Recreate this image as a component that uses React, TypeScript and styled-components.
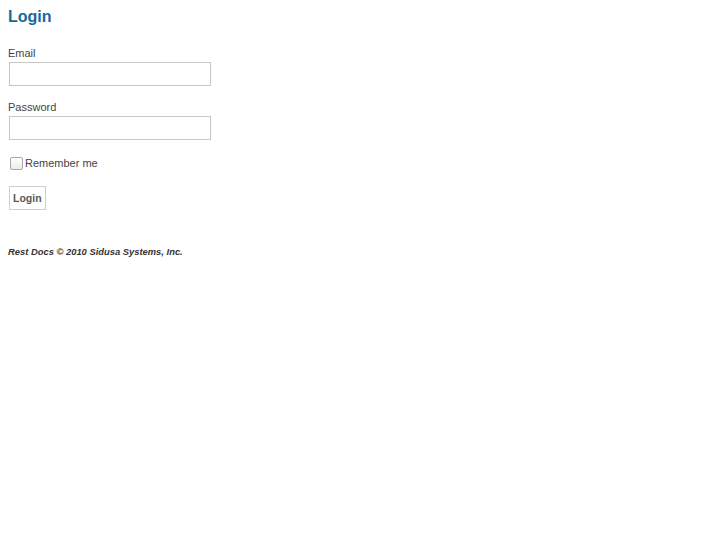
import React from 'react';
import styled, { createGlobalStyle } from 'styled-components';

const GlobalStyle = createGlobalStyle`
  html, body {
    margin: 0;
    padding: 0;
    background: #ffffff;
  }
  body {
    font-family: "Liberation Sans", Arial, sans-serif;
    color: #444444;
  }
`;

const Page = styled.div`
  padding: 8px;
`;

const Title = styled.h2`
  margin: 0;
  font-size: 16px;
  line-height: 18px;
  font-weight: bold;
  color: #17699c;
`;

const Form = styled.form`
  display: flex;
  flex-direction: column;
  align-items: flex-start;
  margin-top: 21px;
`;

const Field = styled.div<{ $gap?: number }>`
  display: flex;
  flex-direction: column;
  align-items: flex-start;
  margin-top: ${(props) => props.$gap ?? 0}px;
`;

const Label = styled.label`
  font-size: 11px;
  line-height: 13px;
  color: #444444;
`;

const Input = styled.input`
  box-sizing: border-box;
  width: 202px;
  height: 24px;
  margin: 2px 0 0 1px;
  padding: 2px 4px;
  border: 1px solid #c6c6c6;
  background: #ffffff;
  font-family: inherit;
  font-size: 11px;
  outline: none;
`;

const CheckRow = styled.label`
  display: flex;
  align-items: center;
  margin-top: 17px;
  font-size: 11px;
  line-height: 13px;
  color: #444444;
`;

const CheckBox = styled.input`
  box-sizing: border-box;
  appearance: none;
  width: 13px;
  height: 13px;
  margin: 0 2px 0 2px;
  border: 1px solid #a9a9a9;
  border-radius: 2px;
  background: linear-gradient(#ffffff, #ececec);
`;

const Button = styled.button`
  box-sizing: border-box;
  margin: 16px 0 0 1px;
  height: 24px;
  padding: 0 3px;
  border: 1px solid #cfcfcf;
  background: #ffffff;
  color: #5a5a5a;
  font-family: inherit;
  font-weight: bold;
  font-size: 10.5px;
`;

const Footer = styled.div`
  margin-top: 36px;
  font-size: 9.4px;
  line-height: 11px;
  font-weight: bold;
  font-style: italic;
  color: #333333;
`;

export default function App() {
  return (
    <Page>
      <GlobalStyle />
      <Title>Login</Title>
      <Form onSubmit={(e) => e.preventDefault()}>
        <Field>
          <Label htmlFor="email">Email</Label>
          <Input id="email" type="text" />
        </Field>
        <Field $gap={15}>
          <Label htmlFor="password">Password</Label>
          <Input id="password" type="password" />
        </Field>
        <CheckRow>
          <CheckBox type="checkbox" />
          Remember me
        </CheckRow>
        <Button type="submit">Login</Button>
      </Form>
      <Footer>Rest Docs © 2010 Sidusa Systems, Inc.</Footer>
    </Page>
  );
}
